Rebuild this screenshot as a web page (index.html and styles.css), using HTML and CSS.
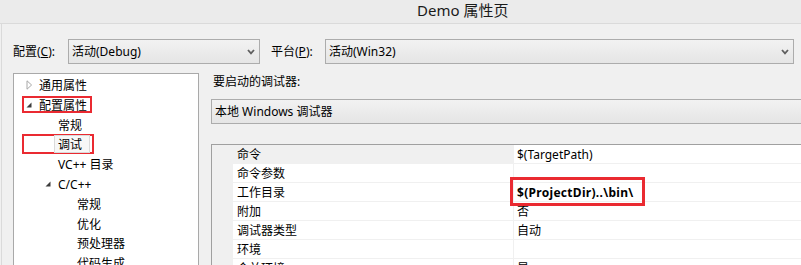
FILE: index.html
```html
<!DOCTYPE html>
<html lang="zh-CN">
<head>
    <meta charset="UTF-8">
    <title>Demo 属性页</title>
    <link rel="stylesheet" href="styles.css">
</head>
<body>
    <!-- Window title -->
    <div class="titlebar">Demo 属性页</div>

    <div class="dialog">
        <!-- Configuration / platform selectors -->
        <div class="config-row">
            <label class="field-label config-label">配置(<u>C</u>):</label>
            <div class="combo combo-config">
                <span class="combo-text">活动(Debug)</span>
                <svg class="chevron" width="8" height="6" viewBox="0 0 8 6"><path d="M1 1 L4 4.3 L7 1" fill="none" stroke="#5f5f5f" stroke-width="1.8"/></svg>
            </div>
            <label class="field-label platform-label">平台(<u>P</u>):</label>
            <div class="combo combo-platform">
                <span class="combo-text">活动(Win32)</span>
                <svg class="chevron" width="8" height="6" viewBox="0 0 8 6"><path d="M1 1 L4 4.3 L7 1" fill="none" stroke="#5f5f5f" stroke-width="1.8"/></svg>
            </div>
        </div>

        <div class="main">
            <!-- Property page tree -->
            <div class="tree">
                <div class="node lvl0">
                    <span class="exp"><svg width="7" height="10" viewBox="0 0 7 10"><path d="M1 0.8 L5.6 5 L1 9.2 Z" fill="none" stroke="#a8a8a8"/></svg></span>
                    <span class="txt">通用属性</span>
                </div>
                <div class="node lvl0">
                    <span class="mark mark-config">
                        <span class="exp"><svg width="6" height="6" viewBox="0 0 6 6"><path d="M5.5 0.5 L5.5 5.5 L0.5 5.5 Z" fill="#3c3c3c"/></svg></span>
                        <span class="txt">配置属性</span>
                    </span>
                </div>
                <div class="node lvl1"><span class="exp"></span><span class="txt">常规</span></div>
                <div class="node lvl1">
                    <span class="mark mark-debug"><span class="selected">调试</span></span>
                </div>
                <div class="node lvl1"><span class="exp"></span><span class="txt">VC++ 目录</span></div>
                <div class="node lvl1">
                    <span class="exp"><svg width="6" height="6" viewBox="0 0 6 6"><path d="M5.5 0.5 L5.5 5.5 L0.5 5.5 Z" fill="#3c3c3c"/></svg></span>
                    <span class="txt">C/C++</span>
                </div>
                <div class="node lvl2"><span class="exp"></span><span class="txt">常规</span></div>
                <div class="node lvl2"><span class="exp"></span><span class="txt">优化</span></div>
                <div class="node lvl2"><span class="exp"></span><span class="txt">预处理器</span></div>
                <div class="node lvl2"><span class="exp"></span><span class="txt">代码生成</span></div>
            </div>

            <!-- Debugger settings -->
            <div class="panel">
                <div class="panel-label">要启动的调试器:</div>
                <div class="combo combo-debugger">
                    <span class="combo-text">本地 Windows 调试器</span>
                </div>

                <div class="grid">
                    <div class="row first">
                        <div class="gutter"></div>
                        <div class="name">命令</div>
                        <div class="val">$(TargetPath)</div>
                    </div>
                    <div class="row">
                        <div class="gutter"></div>
                        <div class="name">命令参数</div>
                        <div class="val"></div>
                    </div>
                    <div class="row">
                        <div class="gutter"></div>
                        <div class="name">工作目录</div>
                        <div class="val bold">$(ProjectDir)..\bin\<span class="val-mark"></span></div>
                    </div>
                    <div class="row">
                        <div class="gutter"></div>
                        <div class="name">附加</div>
                        <div class="val">否</div>
                    </div>
                    <div class="row">
                        <div class="gutter"></div>
                        <div class="name">调试器类型</div>
                        <div class="val">自动</div>
                    </div>
                    <div class="row">
                        <div class="gutter"></div>
                        <div class="name">环境</div>
                        <div class="val"></div>
                    </div>
                    <div class="row">
                        <div class="gutter"></div>
                        <div class="name">合并环境</div>
                        <div class="val">是</div>
                    </div>
                </div>
            </div>
        </div>
    </div>
</body>
</html>
```

FILE: styles.css
```css
/* General styles */
body {
    margin: 0;
    width: 801px;
    height: 265px;
    overflow: hidden;
    background: #f0f0f0;
    font-family: "Noto Sans", "Noto Sans CJK SC", sans-serif;
    font-size: 12px;
    color: #000;
}

/* Title bar */
.titlebar {
    height: 23px;
    line-height: 20px;
    padding-left: 417px;
    background: #ebebeb;
    border-bottom: 1px solid #dadada;
    font-size: 15px;
    color: #1a1a1a;
}

.dialog {
    margin-left: 1px;
    border-left: 1px solid #dadada;
    height: 241px;
}

/* Config row */
.config-row {
    display: flex;
    align-items: center;
    padding: 15px 0 0 11px;
}

.field-label {
    line-height: 16px;
}

.config-label {
    width: 55px;
}

.platform-label {
    width: 54px;
    margin-left: 11px;
}

.combo {
    box-sizing: border-box;
    height: 25px;
    display: flex;
    align-items: center;
    justify-content: space-between;
    padding: 0 4px 0 3px;
    border: 1px solid #acacac;
    background: linear-gradient(#f2f2f2, #e5e5e5);
}

.combo-config {
    width: 192px;
}

.combo-platform {
    width: 469px;
}

.combo-text {
    line-height: 16px;
}

.chevron {
    display: block;
}

/* Main area */
.main {
    display: flex;
    margin: 9px -40px 0 11px;
}

.tree {
    box-sizing: border-box;
    width: 186px;
    height: 200px;
    flex: none;
    padding-top: 1px;
    background: #fff;
    border: 1px solid #a9a9a9;
}

.node {
    display: flex;
    align-items: center;
    height: 19.75px;
    white-space: nowrap;
}

.node.lvl0 { padding-left: 12px; }
.node.lvl1 { padding-left: 31px; }
.node.lvl2 { padding-left: 50px; }

.exp {
    width: 13px;
    flex: none;
    display: flex;
    align-items: center;
    padding-top: 1px;
}

.exp svg {
    display: block;
}

.txt {
    line-height: 16px;
    padding-top: 3px;
}

/* Red annotation frames */
.mark {
    box-sizing: border-box;
    display: flex;
    align-items: center;
    border: 2px solid #ea2a31;
}

.mark-config {
    height: 17px;
    margin-left: -4px;
    padding: 0 3px 0 2px;
}

.mark-config .txt {
    padding-top: 2px;
}

.mark-debug {
    height: 20px;
    margin-left: -23px;
    padding: 0 2px 0 30px;
}

.selected {
    box-sizing: border-box;
    height: 18px;
    line-height: 16px;
    padding: 1px 7px 0 3px;
    background: #f7f7f7;
    border: 1px solid #dadada;
}

/* Right panel */
.panel {
    flex: 1;
    margin-left: 12px;
}

.panel-label {
    line-height: 16px;
    padding: 1px 0 0 2px;
}

.combo-debugger {
    margin-top: 9px;
}

/* Property grid */
.grid {
    margin-top: 20px;
    background: #f0f0f0;
    border-top: 1px solid #a0a0a0;
    border-left: 1px solid #a0a0a0;
}

.row {
    display: flex;
    height: 19px;
}

.gutter {
    width: 21px;
    flex: none;
}

.name,
.val {
    box-sizing: border-box;
    height: 19px;
    padding-top: 2px;
    line-height: 16px;
    background: #fff;
    border-bottom: 1px solid #f0f0f0;
    white-space: nowrap;
}

.name {
    width: 281px;
    flex: none;
    padding-left: 4px;
    border-right: 1px solid #f0f0f0;
}

.row.first .name {
    background: #f0f0f0;
}

.val {
    flex: 1;
    padding-left: 3px;
    position: relative;
}

.val.bold {
    font-weight: bold;
    letter-spacing: 0.3px;
}

.val-mark {
    position: absolute;
    z-index: 1;
    left: -4px;
    top: -6px;
    width: 135px;
    height: 29px;
    box-sizing: border-box;
    border: 3px solid #ea2a31;
}
```
